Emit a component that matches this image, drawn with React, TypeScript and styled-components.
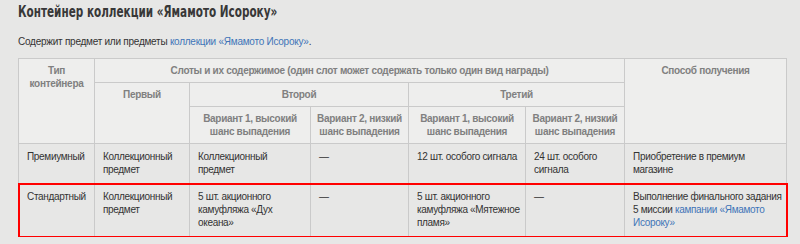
import React from "react";
import styled, { createGlobalStyle } from "styled-components";

const Global = createGlobalStyle`
  html, body { margin: 0; padding: 0; }
  body {
    background: #e7e7e6;
    font-family: "Liberation Sans", Arial, sans-serif;
    font-size: 10px;
    letter-spacing: -0.25px;
    color: #333;
  }
`;

const Page = styled.div`
  padding: 2px 14px 0 18px;
`;

const Title = styled.h2`
  margin: 0;
  height: 20px;
  font-size: 15.5px;
  line-height: 20px;
`;

const TitleText = styled.span`
  display: inline-block;
  font-family: "DejaVu Sans Condensed", "DejaVu Sans", sans-serif;
  font-stretch: condensed;
  font-weight: bold;
  letter-spacing: 0;
  color: #383838;
  transform: scaleX(0.75);
  transform-origin: left center;
  white-space: nowrap;
`;

const Lead = styled.p`
  margin: 13px 0 9px;
  line-height: 14px;
  color: #333;
`;

const Link = styled.a`
  color: #3f75b8;
  text-decoration: none;
`;

const Table = styled.table`
  border-collapse: collapse;
  table-layout: fixed;
  width: 768px;
  line-height: 13px;
`;

const Th = styled.th`
  border: 1px solid #cacaca;
  background: #eeeeed;
  color: #808080;
  font-weight: bold;
  letter-spacing: -0.3px;
  text-align: center;
  vertical-align: top;
  padding: 5px 2px;
`;

const Row = styled.tr<{ $highlight?: boolean }>`
  outline: ${(p) => (p.$highlight ? "2px solid #f00" : "none")};
  outline-offset: -1px;
`;

const Td = styled.td`
  border: 1px solid #cacaca;
  vertical-align: top;
  padding: 6px 2px 7px 8px;
  letter-spacing: -0.32px;
  color: #333;

  &:nth-child(3) {
    padding-right: 8px;
  }
  &:nth-child(5),
  &:nth-child(7) {
    padding-right: 0;
  }
`;

export default function App() {
  return (
    <>
      <Global />
      <Page>
        <Title>
          <TitleText>Контейнер коллекции «Ямамото Исороку»</TitleText>
        </Title>
        <Lead>
          Содержит предмет или предметы <Link href="#">коллекции «Ямамото Исороку»</Link>.
        </Lead>
        <Table>
          <colgroup>
            <col style={{ width: 76 }} />
            <col style={{ width: 95 }} />
            <col style={{ width: 121 }} />
            <col style={{ width: 98 }} />
            <col style={{ width: 117 }} />
            <col style={{ width: 99 }} />
            <col style={{ width: 162 }} />
          </colgroup>
          <thead>
            <tr>
              <Th rowSpan={3}>Тип контейнера</Th>
              <Th colSpan={5}>Слоты и их содержимое (один слот может содержать только один вид награды)</Th>
              <Th rowSpan={3}>Способ получения</Th>
            </tr>
            <tr>
              <Th rowSpan={2}>Первый</Th>
              <Th colSpan={2}>Второй</Th>
              <Th colSpan={2}>Третий</Th>
            </tr>
            <tr>
              <Th>Вариант 1, высокий шанс выпадения</Th>
              <Th>Вариант 2, низкий шанс выпадения</Th>
              <Th>Вариант 1, высокий шанс выпадения</Th>
              <Th>Вариант 2, низкий шанс выпадения</Th>
            </tr>
          </thead>
          <tbody>
            <Row>
              <Td>Премиумный</Td>
              <Td>Коллекционный предмет</Td>
              <Td>Коллекционный предмет</Td>
              <Td>—</Td>
              <Td>12 шт. особого сигнала</Td>
              <Td>24 шт. особого сигнала</Td>
              <Td>Приобретение в премиум магазине</Td>
            </Row>
            <Row $highlight>
              <Td>Стандартный</Td>
              <Td>Коллекционный предмет</Td>
              <Td>5 шт. акционного камуфляжа «Дух океана»</Td>
              <Td>—</Td>
              <Td>5 шт. акционного камуфляжа «Мятежное пламя»</Td>
              <Td>—</Td>
              <Td>
                Выполнение финального задания 5 миссии <Link href="#">кампании «Ямамото Исороку»</Link>
              </Td>
            </Row>
          </tbody>
        </Table>
      </Page>
    </>
  );
}
